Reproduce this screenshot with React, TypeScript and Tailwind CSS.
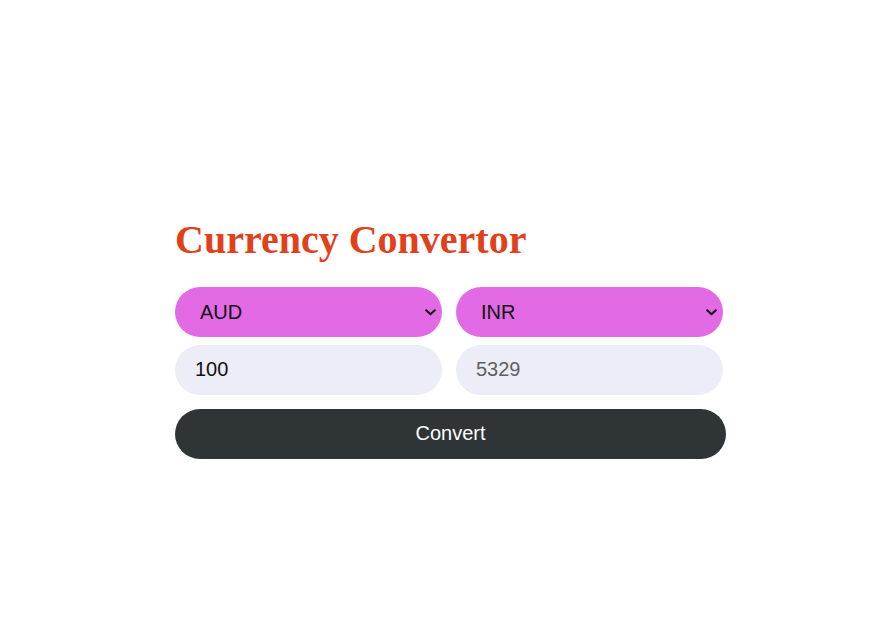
import React from "react";

function Chevron() {
  return (
    <svg width="11" height="7" viewBox="0 0 11 7" className="pointer-events-none absolute right-[6px] top-[22px]">
      <path d="M1.2 1.2 L5.5 5.3 L9.8 1.2" fill="none" stroke="#111" strokeWidth="2" strokeLinecap="round" strokeLinejoin="round" />
    </svg>
  );
}

function Select({ value, options }: { value: string; options: string[] }) {
  return (
    <div className="relative w-[267px] h-[50px]">
      <select
        defaultValue={value}
        className="appearance-none w-full h-full rounded-[25px] bg-[#e26be5] pl-[25px] text-[20px] text-[#111] outline-none"
        style={{ fontFamily: '"Liberation Sans", Arial, sans-serif' }}
      >
        {options.map((o) => (
          <option key={o} value={o}>
            {o}
          </option>
        ))}
      </select>
      <Chevron />
    </div>
  );
}

export default function App() {
  const opts = ["AUD", "INR", "USD", "EUR", "GBP"];
  return (
    <div className="min-h-screen bg-white pl-[175px] pt-[218px]" style={{ fontFamily: '"Liberation Sans", Arial, sans-serif' }}>
      <div className="w-[551px] flex flex-col">
        <h1
          className="text-[40px] leading-[44px] font-bold text-[#e2401b]"
          style={{ fontFamily: '"Liberation Serif", "Times New Roman", serif' }}
        >
          Currency Convertor
        </h1>
        <div className="mt-[25px] flex gap-[14px]">
          <Select value="AUD" options={opts} />
          <Select value="INR" options={opts} />
        </div>
        <div className="mt-[8px] flex gap-[14px]">
          <input
            defaultValue="100"
            className="w-[267px] h-[50px] rounded-[25px] bg-[#ededf7] pl-[20px] pb-[2px] text-[20px] text-[#111] outline-none"
          />
          <input
            placeholder="5329"
            className="w-[267px] h-[50px] rounded-[25px] bg-[#ededf7] pl-[20px] pb-[2px] text-[20px] text-[#111] placeholder:text-[#5f5f5f] outline-none"
          />
        </div>
        <button className="mt-[14px] w-[551px] h-[50px] rounded-[25px] bg-[#2f3537] pb-[2px] text-white text-[20px]">
          Convert
        </button>
      </div>
    </div>
  );
}
